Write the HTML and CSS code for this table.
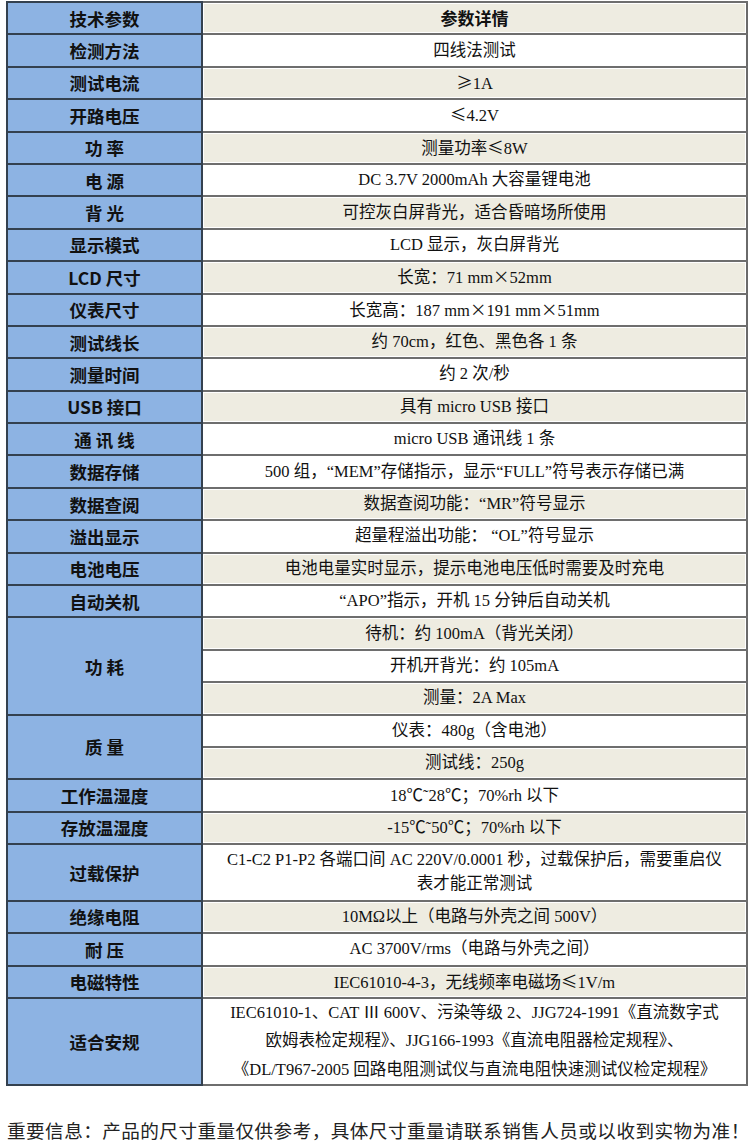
FILE: index.html
```html
<!DOCTYPE html>
<html lang="zh-CN">
<head>
<meta charset="utf-8">
<title>技术参数</title>
<link rel="stylesheet" href="styles.css">
</head>
<body>
<table class="spec">
  <colgroup><col class="c-key"><col class="c-val"></colgroup>
  <tr><th>技术参数</th><td class="alt head">参数详情</td></tr>
  <tr><th>检测方法</th><td>四线法测试</td></tr>
  <tr><th>测试电流</th><td class="alt"><span class="cjk">≥</span>1A</td></tr>
  <tr><th>开路电压</th><td><span class="cjk">≤</span>4.2V</td></tr>
  <tr><th>功 率</th><td class="alt">测量功率<span class="cjk">≤</span>8W</td></tr>
  <tr><th>电 源</th><td>DC 3.7V 2000mAh 大容量锂电池</td></tr>
  <tr><th>背 光</th><td class="alt">可控灰白屏背光，适合昏暗场所使用</td></tr>
  <tr><th>显示模式</th><td>LCD 显示，灰白屏背光</td></tr>
  <tr><th>LCD 尺寸</th><td class="alt">长宽：71 mm<span class="cjk">×</span>52mm</td></tr>
  <tr><th>仪表尺寸</th><td>长宽高：187 mm<span class="cjk">×</span>191 mm<span class="cjk">×</span>51mm</td></tr>
  <tr><th>测试线长</th><td class="alt">约 70cm，红色、黑色各 1 条</td></tr>
  <tr><th>测量时间</th><td>约 2 次/秒</td></tr>
  <tr><th>USB 接口</th><td class="alt">具有 micro USB 接口</td></tr>
  <tr><th>通 讯 线</th><td>micro USB 通讯线 1 条</td></tr>
  <tr><th>数据存储</th><td>500 组，“MEM”存储指示，显示“FULL”符号表示存储已满</td></tr>
  <tr><th>数据查阅</th><td class="alt">数据查阅功能：“MR”符号显示</td></tr>
  <tr><th>溢出显示</th><td>超量程溢出功能：&nbsp;“OL”符号显示</td></tr>
  <tr><th>电池电压</th><td class="alt">电池电量实时显示，提示电池电压低时需要及时充电</td></tr>
  <tr><th>自动关机</th><td>“APO”指示，开机 15 分钟后自动关机</td></tr>
  <tr><th rowspan="3">功 耗</th><td class="alt">待机：约 100mA（背光关闭）</td></tr>
  <tr><td>开机开背光：约 105mA</td></tr>
  <tr><td class="alt">测量：2A Max</td></tr>
  <tr><th rowspan="2">质 量</th><td>仪表：480g（含电池）</td></tr>
  <tr><td class="alt">测试线：250g</td></tr>
  <tr><th>工作温湿度</th><td>18℃˜28℃；70%rh 以下</td></tr>
  <tr><th>存放温湿度</th><td class="alt">-15℃˜50℃；70%rh 以下</td></tr>
  <tr class="r2"><th>过载保护</th><td>C1-C2 P1-P2 各端口间 AC 220V/0.0001 秒，过载保护后，需要重启仪<br>表才能正常测试</td></tr>
  <tr><th>绝缘电阻</th><td class="alt">10MΩ以上（电路与外壳之间 500V）</td></tr>
  <tr><th>耐 压</th><td>AC 3700V/rms（电路与外壳之间）</td></tr>
  <tr><th>电磁特性</th><td class="alt">IEC61010-4-3，无线频率电磁场<span class="cjk">≤</span>1V/m</td></tr>
  <tr class="r3"><th>适合安规</th><td class="multi">IEC61010-1、CAT Ⅲ 600V、污染等级 2、JJG724-1991《直流数字式<br>欧姆表检定规程》、JJG166-1993《直流电阻器检定规程》、<br>《DL/T967-2005 回路电阻测试仪与直流电阻快速测试仪检定规程》</td></tr>
</table>
<p class="note">重要信息：产品的尺寸重量仅供参考，具体尺寸重量请联系销售人员或以收到实物为准！</p>
</body>
</html>
```
FILE: styles.css
```css
html, body {
  margin: 0;
  padding: 0;
  background: #ffffff;
}
body {
  width: 750px;
  color: #111111;
}
.spec {
  margin: 1px 0 0 6px;
  width: 740px;
  border-collapse: collapse;
  table-layout: fixed;
  border-right: 2px solid #6a6a6a;
  border-bottom: 2px solid #6a6a6a;
  border-top: 2px solid #5a5a5a;
}
.c-key { width: 195px; }
.c-val { width: 545px; }
.spec tr { height: 32.4px; }
.spec tr.r2 { height: 56.6px; }
.spec tr.r3 { height: 87px; }
.spec th {
  background: #8db3e3;
  border: 2px solid #34414f;
  font-family: "Noto Sans CJK SC", sans-serif;
  font-weight: 700;
  font-size: 17.5px;
  color: #111111;
  text-align: center;
  vertical-align: middle;
  padding: 0;
  white-space: pre;
}
.spec td {
  background: #ffffff;
  border-top: 2px solid #6e6e6e;
  border-bottom: 2px solid #6e6e6e;
  font-family: "Liberation Serif", "Noto Sans CJK SC", serif;
  font-size: 16.5px;
  line-height: 24px;
  text-align: center;
  vertical-align: middle;
  padding: 0 4px;
  white-space: nowrap;
}
.spec td.alt {
  background: #eeece1;
  box-shadow: inset 0 0 0 1px #ffffff;
}
.spec td.head {
  font-family: "Noto Sans CJK SC", sans-serif;
  font-weight: 700;
  font-size: 17px;
}
.spec td.multi {
  line-height: 28.5px;
}
.cjk {
  font-family: "Noto Sans CJK SC", sans-serif;
}
.note {
  margin: 33px 0 0 7px;
  font-family: "Noto Sans CJK SC", serif;
  font-size: 18.6px;
  line-height: 22px;
  letter-spacing: 0.45px;
  color: #222222;
  white-space: nowrap;
}
```
